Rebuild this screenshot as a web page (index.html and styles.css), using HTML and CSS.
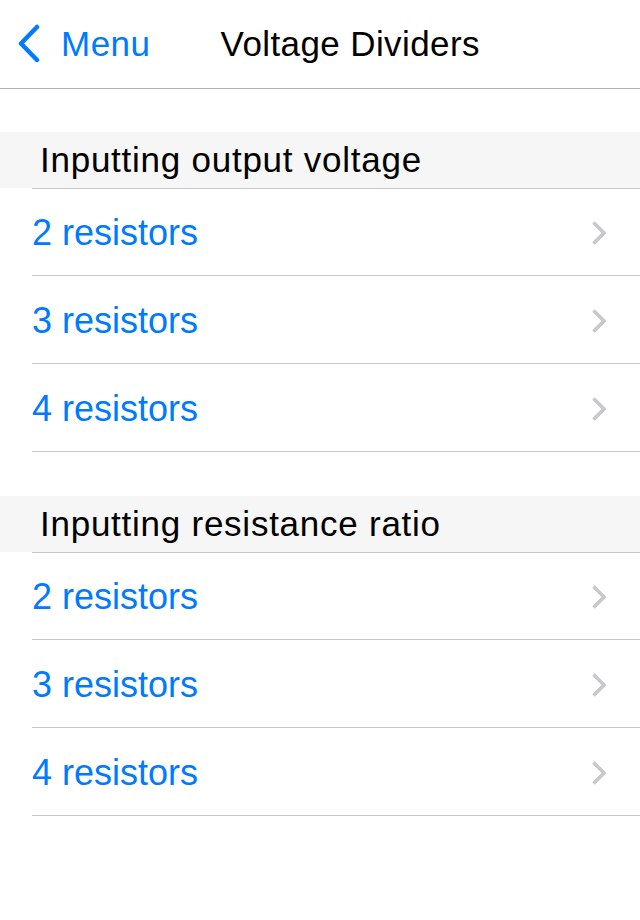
FILE: index.html
```html
<html lang="en">
<head>
    <meta charset="UTF-8">
    <meta name="viewport" content="width=device-width, initial-scale=1.0">
    <title>Voltage Dividers</title>
    <link rel="stylesheet" href="styles.css">
</head>
<body>
    <div class="navbar">
        <a class="back" href="#">
            <svg class="back-icon" width="24" height="40" viewBox="0 0 24 40">
                <path d="M20 3 L4 19.5 L20 36" fill="none" stroke="#007aff" stroke-width="4.5" stroke-linecap="round" stroke-linejoin="round"/>
            </svg>
            <span>Menu</span>
        </a>
        <div class="title">Voltage Dividers</div>
    </div>

    <div class="section">
        <div class="section-header">Inputting output voltage</div>
        <ul class="list">
            <li class="cell"><span>2 resistors</span><svg class="chevron" width="16" height="26" viewBox="0 0 16 26"><path d="M2.5 2.5 L13 13 L2.5 23.5" fill="none" stroke="#c7c7cc" stroke-width="3.6"/></svg></li>
            <li class="cell"><span>3 resistors</span><svg class="chevron" width="16" height="26" viewBox="0 0 16 26"><path d="M2.5 2.5 L13 13 L2.5 23.5" fill="none" stroke="#c7c7cc" stroke-width="3.6"/></svg></li>
            <li class="cell"><span>4 resistors</span><svg class="chevron" width="16" height="26" viewBox="0 0 16 26"><path d="M2.5 2.5 L13 13 L2.5 23.5" fill="none" stroke="#c7c7cc" stroke-width="3.6"/></svg></li>
        </ul>
    </div>

    <div class="section">
        <div class="section-header">Inputting resistance ratio</div>
        <ul class="list">
            <li class="cell"><span>2 resistors</span><svg class="chevron" width="16" height="26" viewBox="0 0 16 26"><path d="M2.5 2.5 L13 13 L2.5 23.5" fill="none" stroke="#c7c7cc" stroke-width="3.6"/></svg></li>
            <li class="cell"><span>3 resistors</span><svg class="chevron" width="16" height="26" viewBox="0 0 16 26"><path d="M2.5 2.5 L13 13 L2.5 23.5" fill="none" stroke="#c7c7cc" stroke-width="3.6"/></svg></li>
            <li class="cell"><span>4 resistors</span><svg class="chevron" width="16" height="26" viewBox="0 0 16 26"><path d="M2.5 2.5 L13 13 L2.5 23.5" fill="none" stroke="#c7c7cc" stroke-width="3.6"/></svg></li>
        </ul>
    </div>
</body>
</html>
```

FILE: styles.css
```css
body {
    font-family: 'Liberation Sans', Arial, sans-serif;
    margin: 0;
    background: #fff;
    color: #000;
}

.navbar {
    height: 88px;
    border-bottom: 1px solid #b2b2b2;
    display: flex;
    align-items: center;
    padding-left: 17px;
}

.back {
    display: flex;
    align-items: center;
    gap: 20px;
    color: #007aff;
    text-decoration: none;
    font-size: 35px;
    letter-spacing: 0.5px;
}

.title {
    margin-left: 70px;
    font-size: 35px;
    letter-spacing: 0.4px;
}

.section {
    margin-top: 43px;
}

.section + .section {
    margin-top: 44px;
}

.section-header {
    height: 56px;
    background: #f6f6f6;
    display: flex;
    align-items: center;
    padding-left: 40px;
    font-size: 35px;
    letter-spacing: 0.75px;
}

.list {
    list-style: none;
    margin: 0;
    padding: 0;
    margin-left: 32px;
    border-top: 1px solid #c8c7cc;
}

.cell {
    height: 85px;
    padding-top: 2px;
    padding-right: 33px;
    border-bottom: 1px solid #c8c7cc;
    display: flex;
    align-items: center;
    justify-content: space-between;
    color: #007aff;
    font-size: 36px;
}

.cell:first-child {
    height: 84px;
}
```
